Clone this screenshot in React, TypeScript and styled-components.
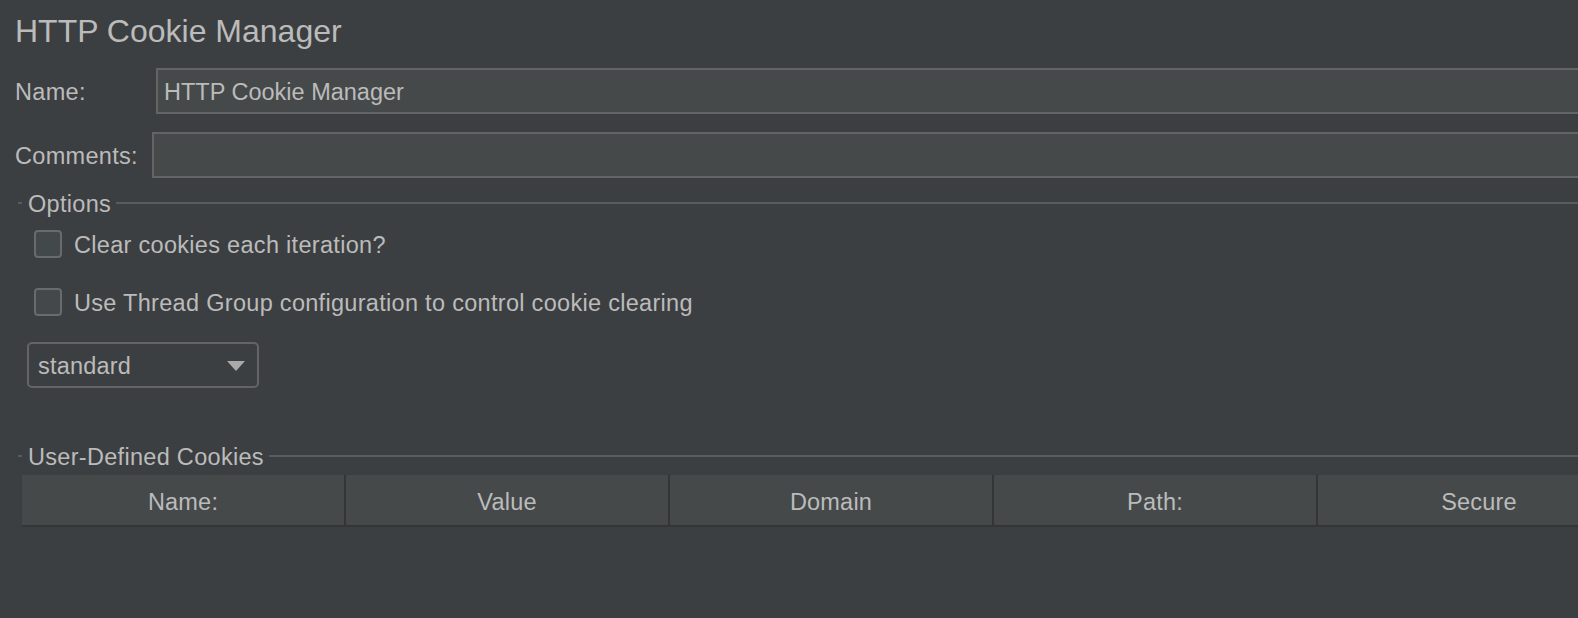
import React from "react";
import styled, { createGlobalStyle } from "styled-components";

const Global = createGlobalStyle`
  html, body {
    margin: 0;
    padding: 0;
    background: #3c3f41;
    overflow: hidden;
  }
  body {
    font-family: "Liberation Sans", Arial, sans-serif;
    color: #bbbbbb;
  }
`;

const Page = styled.div`
  width: 1680px;
  min-height: 618px;
  box-sizing: border-box;
  padding: 11px 0 0 15px;
  display: flex;
  flex-direction: column;
  font-size: 23.5px;
`;

const Title = styled.div`
  font-size: 32px;
  line-height: 40px;
  color: #bbbbbb;
`;

const FieldRow = styled.div<{ $top: number; $label: number }>`
  display: grid;
  grid-template-columns: ${(p) => p.$label}px 1fr;
  align-items: center;
  margin-top: ${(p) => p.$top}px;
`;

const Label = styled.label`
  font-size: 23.5px;
  letter-spacing: 0.3px;
  color: #bbbbbb;
  white-space: nowrap;
  padding-top: 2px;
`;

const TextField = styled.input`
  box-sizing: border-box;
  height: 46px;
  width: 100%;
  border: 2px solid #646464;
  background: #45494a;
  color: #bbbbbb;
  font-family: "Liberation Sans", Arial, sans-serif;
  font-size: 23.5px;
  padding: 2px 6px 0;
  outline: none;
  border-radius: 0;
`;

const GroupTitle = styled.div<{ $top: number }>`
  display: flex;
  align-items: center;
  height: 26px;
  margin-top: ${(p) => p.$top}px;
  &::before {
    content: "";
    width: 4px;
    height: 2px;
    margin-left: 3px;
    background: #595c5e;
  }
  &::after {
    content: "";
    flex: 1;
    height: 2px;
    background: #595c5e;
  }
`;

const GroupText = styled.span`
  padding: 2px 5px 0 6px;
  font-size: 23.5px;
  letter-spacing: 0.3px;
  line-height: 26px;
  color: #bbbbbb;
`;

const CheckRow = styled.label<{ $top: number }>`
  display: flex;
  align-items: center;
  gap: 12px;
  margin-top: ${(p) => p.$top}px;
  margin-left: 19px;
  height: 28px;
  font-size: 23.5px;
  letter-spacing: 0.3px;
  color: #bbbbbb;
`;

const CheckText = styled.span`
  padding-top: 2px;
`;

const Box = styled.span`
  box-sizing: border-box;
  width: 28px;
  height: 28px;
  border: 2px solid #686a6c;
  border-radius: 4px;
  background: #43494a;
  flex: none;
`;

const Select = styled.div`
  box-sizing: border-box;
  margin-top: 26px;
  margin-left: 12px;
  width: 232px;
  height: 46px;
  border: 2px solid #646464;
  border-radius: 5px;
  display: flex;
  align-items: center;
  justify-content: space-between;
  padding: 2px 12px 0 9px;
  font-size: 23.5px;
  letter-spacing: 0.2px;
  color: #bbbbbb;
`;

const Header = styled.div`
  display: flex;
  margin-top: 6px;
  margin-left: 7px;
  height: 52px;
  box-sizing: border-box;
  border-bottom: 2px solid #333537;
  background: #45494a;
  width: fit-content;
`;

const HeaderCell = styled.div<{ $first?: boolean }>`
  width: 322px;
  box-sizing: content-box;
  border-left: ${(p) => (p.$first ? "none" : "2px solid #333537")};
  display: flex;
  align-items: center;
  justify-content: center;
  padding-top: 5px;
  font-size: 23.5px;
  letter-spacing: 0.2px;
  color: #bbbbbb;
`;

const columns = ["Name:", "Value", "Domain", "Path:", "Secure"];

export default function App() {
  return (
    <>
      <Global />
      <Page>
        <Title>HTTP Cookie Manager</Title>
        <FieldRow $top={17} $label={141}>
          <Label>Name:</Label>
          <TextField defaultValue="HTTP Cookie Manager" readOnly />
        </FieldRow>
        <FieldRow $top={18} $label={137}>
          <Label>Comments:</Label>
          <TextField defaultValue="" readOnly />
        </FieldRow>
        <GroupTitle $top={12}>
          <GroupText>Options</GroupText>
        </GroupTitle>
        <CheckRow $top={14}>
          <Box />
          <CheckText>Clear cookies each iteration?</CheckText>
        </CheckRow>
        <CheckRow $top={30}>
          <Box />
          <CheckText>Use Thread Group configuration to control cookie clearing</CheckText>
        </CheckRow>
        <Select>
          <span>standard</span>
          <svg width="18" height="10" viewBox="0 0 18 10">
            <path d="M0 0 H18 L9 10 Z" fill="#a9a9a9" />
          </svg>
        </Select>
        <GroupTitle $top={55}>
          <GroupText>User-Defined Cookies</GroupText>
        </GroupTitle>
        <Header>
          {columns.map((c, i) => (
            <HeaderCell key={c} $first={i === 0}>
              {c}
            </HeaderCell>
          ))}
        </Header>
      </Page>
    </>
  );
}
